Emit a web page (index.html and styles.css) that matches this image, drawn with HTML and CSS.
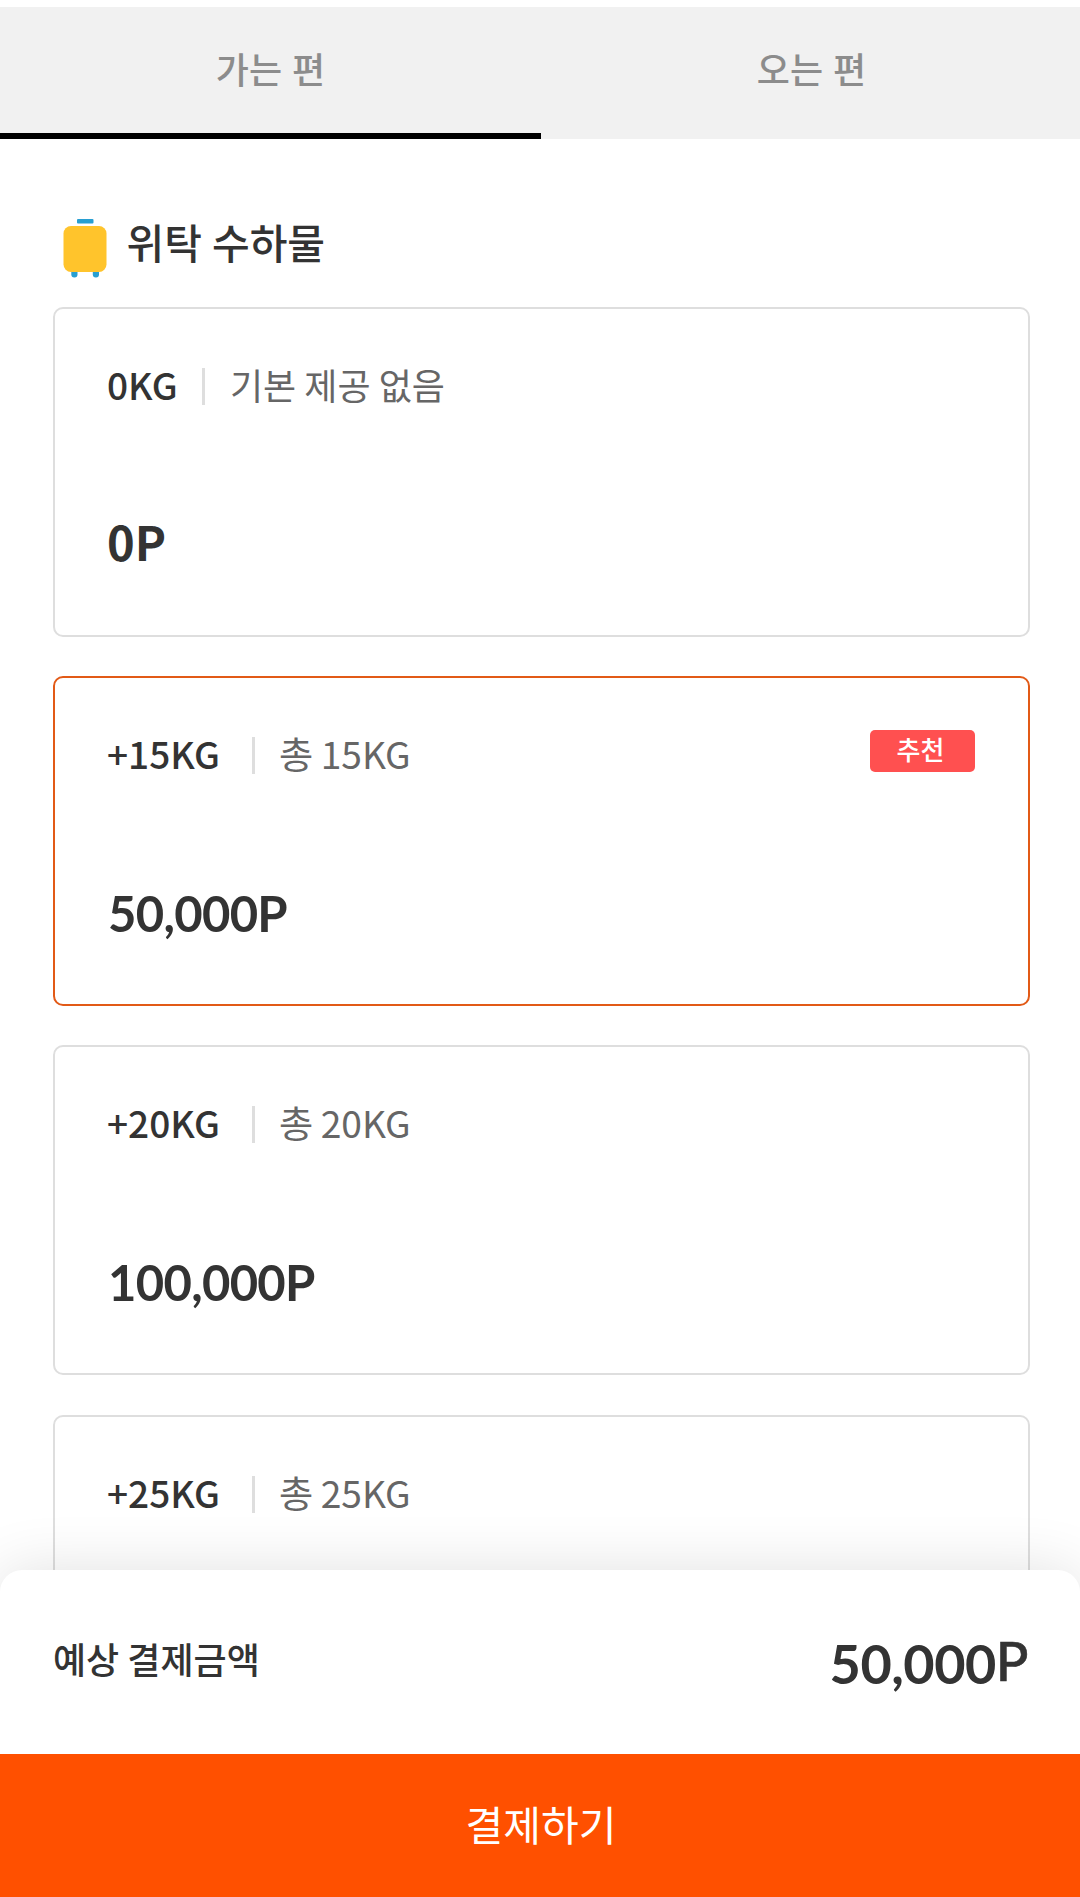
FILE: index.html
```html
<!DOCTYPE html>
<html lang="ko">
<head>
<meta charset="utf-8">
<title>위탁 수하물</title>
<link rel="stylesheet" href="styles.css">
</head>
<body>
<div class="page">
  <nav class="tabs">
    <button class="tab tab--active">가는 편</button>
    <button class="tab">오는 편</button>
  </nav>
  <main class="content">
    <h1 class="title">
      <svg class="title__icon" width="44" height="60" viewBox="0 0 44 60">
        <rect x="14" y="1" width="16.5" height="4.4" rx="1" fill="#289fd2"/>
        <rect x="8.3" y="51" width="6.2" height="8.5" rx="3" fill="#289fd2"/>
        <rect x="29.8" y="51" width="6.2" height="8.5" rx="3" fill="#289fd2"/>
        <rect x="0.5" y="8" width="43" height="46" rx="7.5" fill="#ffc42c"/>
      </svg>
      <span class="title__text">위탁 수하물</span>
    </h1>
    <div class="options">
      <section class="card">
        <div class="card__head"><span class="card__label card__label--base">0KG</span><span class="card__bar"></span><span class="card__desc card__desc--base">기본 제공 없음</span></div>
        <div class="card__price card__price--zero">0P</div>
      </section>
      <section class="card card--selected">
        <div class="card__head"><span class="card__label">+15KG</span><span class="card__bar"></span><span class="card__desc">총 15KG</span><span class="badge">추천</span></div>
        <div class="card__price">50,000P</div>
      </section>
      <section class="card">
        <div class="card__head"><span class="card__label">+20KG</span><span class="card__bar"></span><span class="card__desc">총 20KG</span></div>
        <div class="card__price">100,000P</div>
      </section>
      <section class="card">
        <div class="card__head"><span class="card__label">+25KG</span><span class="card__bar"></span><span class="card__desc">총 25KG</span></div>
      </section>
    </div>
  </main>
  <footer class="sheet">
    <div class="total">
      <span class="total__label">예상 결제금액</span>
      <span class="total__value">50,000<span class="total__unit">P</span></span>
    </div>
    <button class="pay">결제하기</button>
  </footer>
</div>
</body>
</html>
```

FILE: styles.css
```css
* { box-sizing: border-box; }

body {
  margin: 0;
  background: #fff;
  color: #333;
  font-family: "Noto Sans CJK KR", sans-serif;
}

button {
  border: 0;
  padding: 0;
  font-family: inherit;
}

.page {
  display: flex;
  flex-direction: column;
  height: 1897px;
  padding-top: 7px;
  overflow: hidden;
}

.tabs {
  display: flex;
  flex: none;
  height: 132px;
  background: #f1f1f1;
}

.tab {
  flex: 1;
  padding: 0 0 4px 2px;
  background: none;
  color: #8c8c8c;
  font-size: 36px;
  font-weight: 500;
  border-bottom: 6px solid transparent;
}

.tab--active {
  flex: 0 0 541px;
  padding-left: 0;
  border-bottom-color: #000;
}

.content {
  flex: 1;
  min-height: 0;
  padding: 79px 50px 0 53px;
  overflow: hidden;
}

.title {
  display: flex;
  align-items: flex-start;
  height: 89px;
  margin: 0;
  padding-left: 10px;
  font-size: 41px;
  font-weight: 500;
  line-height: 46px;
  word-spacing: -1.5px;
}

.title__icon { flex: none; }

.title__text { margin-left: 19.5px; }

.options {
  display: flex;
  flex-direction: column;
  gap: 39.2px;
}

.card {
  flex: none;
  height: 330px;
  padding: 59px 53px 0 52px;
  border: 2px solid #dedede;
  border-radius: 10px;
}

.card--selected { border-color: #e25a17; }

.card__head {
  display: flex;
  height: 37px;
  line-height: 33px;
  font-size: 37px;
}

.card__label {
  width: 145px;
  font-weight: 500;
}

.card__label--base { width: 95px; }

.card__bar {
  width: 3px;
  background: #dedede;
}

.card__desc {
  margin-left: 24px;
  color: #666;
  font-size: 37.2px;
  word-spacing: -3px;
}

.card__desc--base {
  margin-left: 25px;
  font-size: 36px;
  word-spacing: -2px;
}

.badge {
  width: 105px;
  height: 42px;
  margin: -7px 0 0 auto;
  padding-right: 4px;
  border-radius: 5px;
  background: #ff5050;
  color: #fff;
  font-size: 26px;
  font-weight: 500;
  line-height: 38px;
  text-align: center;
}

.card__price {
  margin-top: 109px;
  padding-left: 1px;
  font-family: Lato, sans-serif;
  font-size: 49px;
  font-weight: 700;
  line-height: 60px;
  letter-spacing: -0.7px;
}

.card__price--zero {
  margin-top: 106px;
  padding-left: 0;
  font-family: "Noto Sans CJK KR", sans-serif;
  font-size: 47px;
  letter-spacing: 0;
}

.sheet {
  position: relative;
  flex: none;
  border-radius: 22px 22px 0 0;
  background: #fff;
  box-shadow: 0 0 60px rgba(0, 0, 0, 0.12);
}

.total {
  display: flex;
  justify-content: space-between;
  height: 184px;
  padding: 60px 52px 0 53px;
}

.total__label {
  font-size: 36px;
  font-weight: 500;
  line-height: 56px;
  word-spacing: -2px;
}

.total__value {
  font-family: Lato, sans-serif;
  font-size: 54px;
  font-weight: 700;
  line-height: 67px;
  letter-spacing: -0.5px;
}

.total__unit {
  position: relative;
  top: -3px;
  font-weight: 500;
  -webkit-text-stroke: 0.6px #333;
}

.pay {
  display: block;
  width: 100%;
  height: 143px;
  padding: 0 0 6px 2px;
  background: #ff5000;
  color: #fff;
  font-size: 41px;
}
```
